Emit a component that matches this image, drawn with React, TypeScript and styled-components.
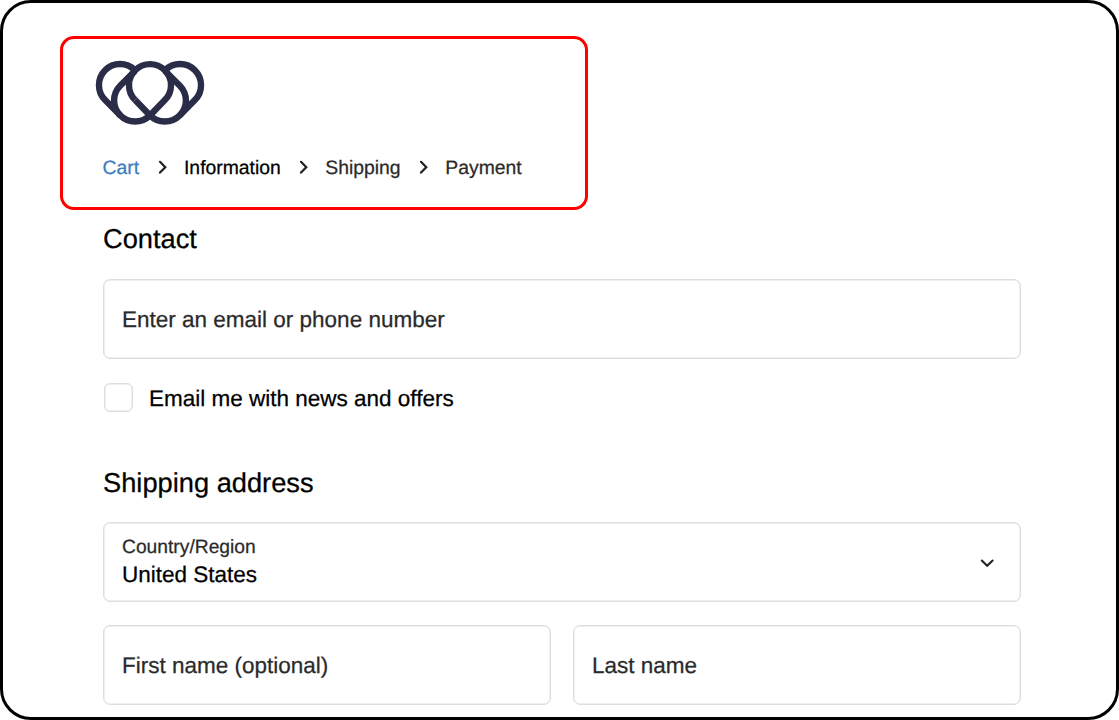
import React from 'react';
import styled, { createGlobalStyle } from 'styled-components';

const GlobalStyle = createGlobalStyle`
  *, *::before, *::after { box-sizing: border-box; }
  body {
    margin: 0;
    background: #fff;
    font-family: "Liberation Sans", Arial, Helvetica, sans-serif;
    color: #000;
    -webkit-text-stroke: 0.25px currentColor;
    text-rendering: geometricPrecision;
  }
`;

const Frame = styled.main`
  width: 1119px;
  height: 720px;
  padding: 33px 95px 0 57px;
  border: 3px solid #000;
  border-radius: 31px;
  background: #fff;
  overflow: hidden;
`;

const Highlight = styled.header`
  display: flex;
  flex-direction: column;
  align-items: flex-start;
  width: 528px;
  height: 174px;
  padding: 20px 33px 0;
  border: 3px solid #fe0000;
  border-radius: 14px;
`;

const Logo = styled.svg`
  display: block;
  width: 112px;
  height: 70px;
  margin-left: -2px;
`;

const Breadcrumbs = styled.nav`
  display: flex;
  align-items: center;
  height: 24px;
  margin: 26px 0 0 6.5px;
`;

const Crumb = styled.span<{ $width: number; $color?: string }>`
  width: ${p => p.$width}px;
  padding-top: 1px;
  color: ${p => p.$color ?? '#2a2a2a'};
  font-size: 19.35px;
  line-height: 24px;
  white-space: nowrap;
`;

const Separator = styled.svg`
  width: 10px;
  height: 16px;
  margin: 0 16.5px 0 18.5px;
  flex: none;
`;

const Form = styled.form`
  width: 918px;
  margin-left: 43px;
`;

const Heading = styled.h2<{ $top: number }>`
  margin: ${p => p.$top}px 0 0;
  font-size: 27.25px;
  font-weight: 400;
  line-height: 32px;
`;

const Field = styled.div<{ $top: number }>`
  display: flex;
  align-items: center;
  justify-content: space-between;
  flex: 1;
  height: 80px;
  margin-top: ${p => p.$top}px;
  padding: 0 25px 0 18px;
  border: 1px solid #dedede;
  border-radius: 7px;
  box-shadow: inset 0 0 0 0.5px #dedede;
`;

const Label = styled.span<{ $dark?: boolean }>`
  color: ${p => (p.$dark ? '#000' : '#2a2a2a')};
  font-size: 22.5px;
  line-height: 27px;
  white-space: nowrap;
`;

const SmallLabel = styled(Label)`
  padding-top: 1px;
  font-size: 19.25px;
  line-height: 26px;
`;

const Stack = styled.div`
  display: flex;
  flex-direction: column;
  padding-bottom: 2px;
`;

const CheckRow = styled.label`
  display: flex;
  align-items: center;
  gap: 16px;
  height: 30px;
  margin: 24px 0 0 1px;
`;

const Checkbox = styled.span`
  width: 29px;
  height: 29px;
  margin-top: -1px;
  border: 1px solid #dedede;
  border-radius: 6px;
  box-shadow: inset 0 0 0 0.5px #dedede;
`;

const Chevron = styled.svg`
  width: 16px;
  height: 12px;
`;

const NameRow = styled.div`
  display: flex;
  gap: 22px;
`;

const Arrow = () => (
  <Separator viewBox="0 0 10 16" fill="none" stroke="#222" strokeWidth="2.2">
    <path d="M2 2.8 L7.3 8.2 L2 13.6" strokeLinecap="round" />
  </Separator>
);

export default function App() {
  return (
    <>
      <GlobalStyle />
      <Frame>
        <Highlight>
          <Logo viewBox="94 59 112 70" fill="none" stroke="#2b2c48" strokeWidth="6.4">
            <path d="M135.15 100 A21 21 0 1 1 164.85 100 L150.15 115.2 A21 21 0 0 1 120.15 115.2 L105.15 100 A21 21 0 0 1 134.85 70.2" />
            <path d="M135.15 100 L149.85 115.2 A21 21 0 0 0 179.85 115.2 L194.85 100 A21 21 0 0 0 165.15 70.2" />
            <path d="M120.15 115.2 A21 21 0 0 1 120.15 85.7 L135.15 70.7" />
            <path d="M179.85 115.2 A21 21 0 0 0 179.85 85.7 L164.85 70.7" />
          </Logo>
          <Breadcrumbs>
            <Crumb $width={36.5} $color="#3a7ebf">Cart</Crumb>
            <Arrow />
            <Crumb $width={96.3} $color="#000">Information</Crumb>
            <Arrow />
            <Crumb $width={75}>Shipping</Crumb>
            <Arrow />
            <Crumb $width={77}>Payment</Crumb>
          </Breadcrumbs>
        </Highlight>
        <Form>
          <Heading $top={13}>Contact</Heading>
          <Field $top={24}>
            <Label>Enter an email or phone number</Label>
          </Field>
          <CheckRow>
            <Checkbox />
            <Label $dark>Email me with news and offers</Label>
          </CheckRow>
          <Heading $top={54}>Shipping address</Heading>
          <Field $top={23}>
            <Stack>
              <SmallLabel>Country/Region</SmallLabel>
              <Label $dark>United States</Label>
            </Stack>
            <Chevron viewBox="0 0 16 12" fill="none" stroke="#222" strokeWidth="2.1">
              <path d="M2.8 4.6 L8.2 9.8 L13.6 4.6" strokeLinecap="round" />
            </Chevron>
          </Field>
          <NameRow>
            <Field $top={23}>
              <Label>First name (optional)</Label>
            </Field>
            <Field $top={23}>
              <Label>Last name</Label>
            </Field>
          </NameRow>
        </Form>
      </Frame>
    </>
  );
}
